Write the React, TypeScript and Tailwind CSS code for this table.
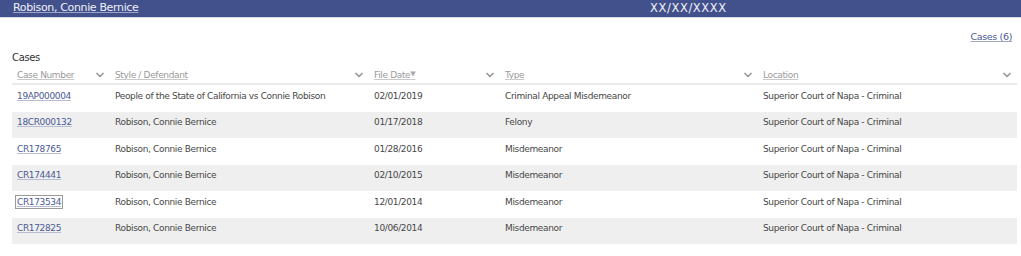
import { ChevronDown } from "lucide-react";

type CaseRow = {
  number: string;
  style: string;
  fileDate: string;
  type: string;
  location: string;
};

const cases: CaseRow[] = [
  {
    number: "19AP000004",
    style: "People of the State of California vs Connie Robison",
    fileDate: "02/01/2019",
    type: "Criminal Appeal Misdemeanor",
    location: "Superior Court of Napa - Criminal",
  },
  { number: "18CR000132", style: "Robison, Connie Bernice", fileDate: "01/17/2018", type: "Felony", location: "Superior Court of Napa - Criminal" },
  { number: "CR178765", style: "Robison, Connie Bernice", fileDate: "01/28/2016", type: "Misdemeanor", location: "Superior Court of Napa - Criminal" },
  { number: "CR174441", style: "Robison, Connie Bernice", fileDate: "02/10/2015", type: "Misdemeanor", location: "Superior Court of Napa - Criminal" },
  { number: "CR173534", style: "Robison, Connie Bernice", fileDate: "12/01/2014", type: "Misdemeanor", location: "Superior Court of Napa - Criminal" },
  { number: "CR172825", style: "Robison, Connie Bernice", fileDate: "10/06/2014", type: "Misdemeanor", location: "Superior Court of Napa - Criminal" },
];

const cols = "grid grid-cols-[98px_259px_131px_258px_259px]";

const HeaderCell = ({ label, sorted }: { label: string; sorted?: boolean }) => (
  <div className="flex items-center justify-between pl-[5px] pr-[4px] pt-[1px]">
    <span className="text-[#9a9a9a] underline decoration-[#c8c8c8]">
      {label}
      {sorted && <span className="text-[7px] align-top text-[#aaa] no-underline">▼</span>}
    </span>
    <ChevronDown size={12} strokeWidth={3.5} className="text-[#999]" />
  </div>
);

const App = () => {
  return (
    <div className="w-[1021px] h-[256px] bg-white font-['DejaVu_Sans',sans-serif] text-[9px] tracking-[-0.35px] text-[#474747]">
      {/* top bar */}
      <div className="h-[18px] bg-[#42508c] border-b border-[#d8dbe6] flex items-center text-[11px] text-[#eef0f6]">
        <span className="pl-[13px] w-[650px] underline decoration-[#9aa3c8]">Robison, Connie Bernice</span>
        <span className="text-[11.5px] tracking-[0.6px]">XX/XX/XXXX</span>
      </div>

      <div className="px-[12px]">
        <div className="flex justify-end pt-[12px]">
          <a className="text-[#4b5a94] underline decoration-[#a0a6c4] mr-[-3px] text-[9.5px]">Cases (6)</a>
        </div>
        <div className="mt-[6px] text-[10px] text-[#333]">Cases</div>

        {/* table */}
        <div className="mt-[1px] w-[1005px]">
          <div className={`${cols} h-[19px] border-b-2 border-[#ebebeb]`}>
            <HeaderCell label="Case Number" />
            <HeaderCell label="Style / Defendant" />
            <HeaderCell label="File Date" sorted />
            <HeaderCell label="Type" />
            <HeaderCell label="Location" />
          </div>
          {cases.map((c, i) => (
            <div
              key={c.number}
              className={`${cols} h-[26.5px] items-center pb-[4px] ${i % 2 === 1 ? "bg-[#efefef]" : "bg-white"}`}
            >
              <div className="pl-[5px]">
                <a
                  className={`text-[#4b5a94] underline decoration-[#b8bcd0] ${
                    c.number === "CR173534" ? "outline outline-1 outline-[#9a9a9a] outline-offset-[1px]" : ""
                  }`}
                >
                  {c.number}
                </a>
              </div>
              <div className="pl-[5px]">{c.style}</div>
              <div className="pl-[5px]">{c.fileDate}</div>
              <div className="pl-[5px]">{c.type}</div>
              <div className="pl-[5px]">{c.location}</div>
            </div>
          ))}
        </div>
      </div>
    </div>
  );
};

export default App;
